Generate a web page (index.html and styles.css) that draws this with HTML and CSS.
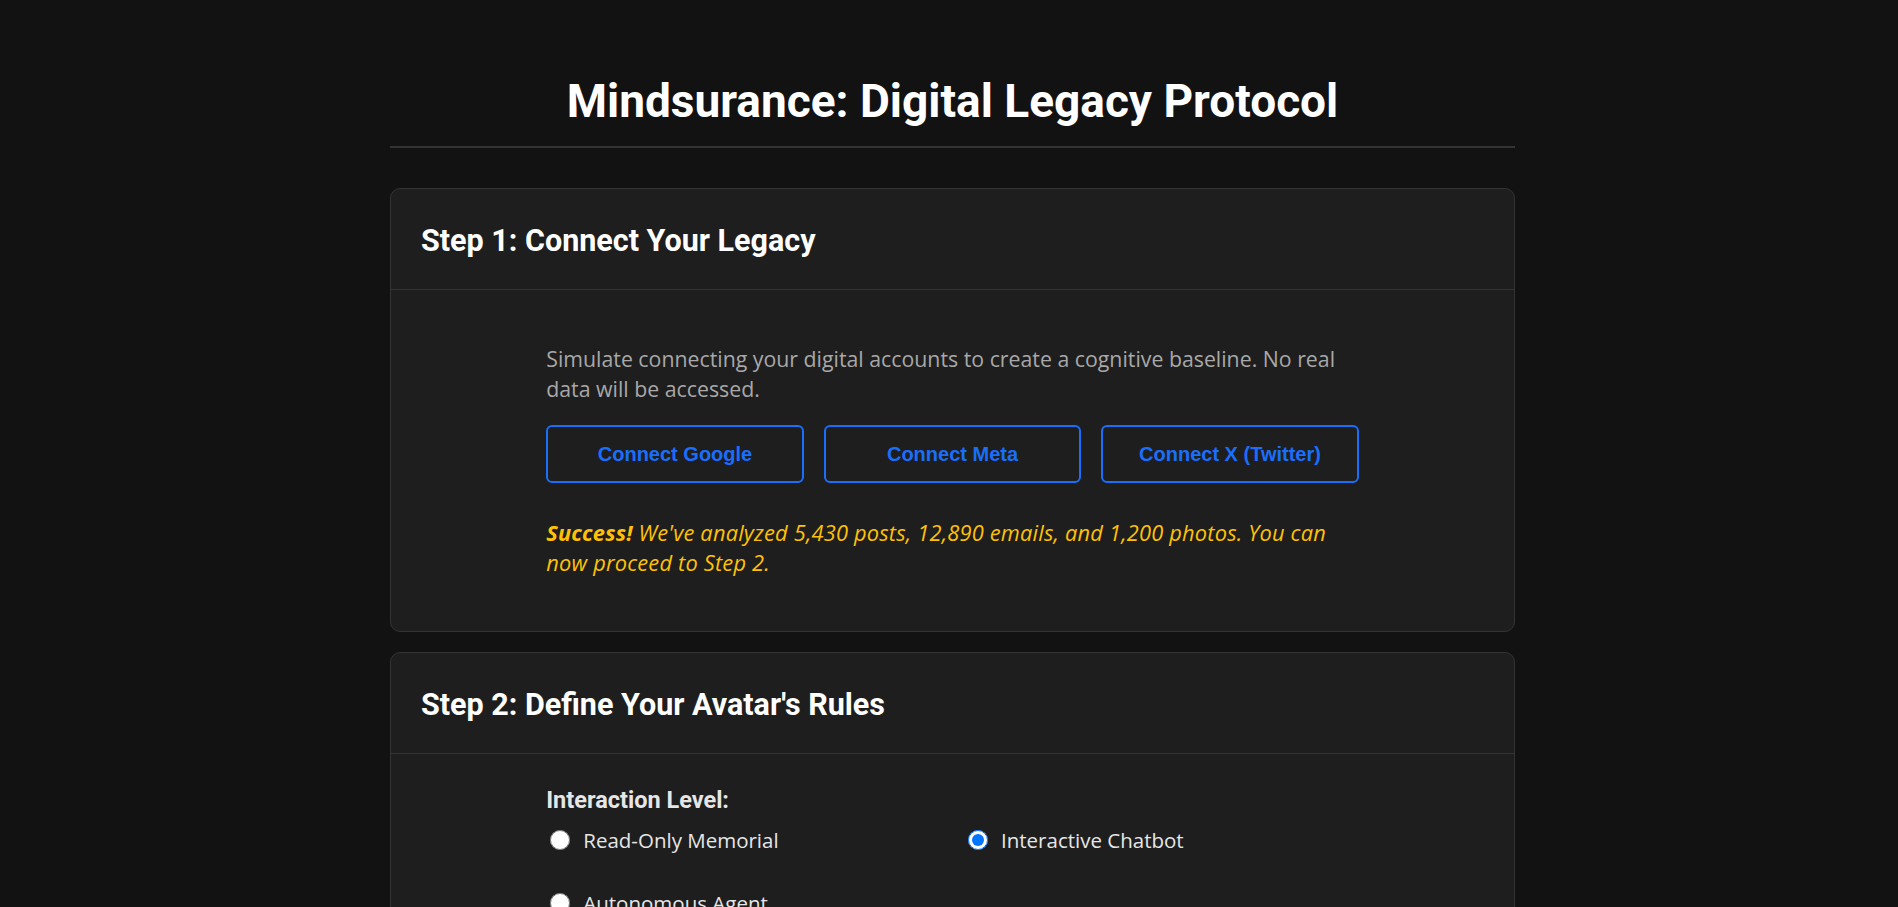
FILE: index.html
```html
<!DOCTYPE html>
<html lang="en">
<head>
<meta charset="utf-8">
<title>Mindsurance: Digital Legacy Protocol</title>
<link rel="stylesheet" href="styles.css">
</head>
<body>
<div class="container">
  <header class="page-header">
    <h1>Mindsurance: Digital Legacy Protocol</h1>
  </header>

  <section class="card">
    <div class="card-header">
      <h2>Step 1: Connect Your Legacy</h2>
    </div>
    <div class="card-body">
      <div class="content">
        <p class="muted">Simulate connecting your digital accounts to create a cognitive baseline. No real data will be accessed.</p>
        <div class="btn-row">
          <button class="btn">Connect Google</button>
          <button class="btn">Connect Meta</button>
          <button class="btn">Connect X (Twitter)</button>
        </div>
        <p class="success"><strong>Success!</strong> We've analyzed 5,430 posts, 12,890 emails, and 1,200 photos. You can now proceed to Step 2.</p>
      </div>
    </div>
  </section>

  <section class="card">
    <div class="card-header">
      <h2>Step 2: Define Your Avatar's Rules</h2>
    </div>
    <div class="card-body card-body-tight">
      <div class="content">
        <div class="field-label">Interaction Level:</div>
        <div class="radio-grid">
          <label class="radio"><input type="radio" name="level" value="memorial"><span>Read-Only Memorial</span></label>
          <label class="radio"><input type="radio" name="level" value="chatbot" checked><span>Interactive Chatbot</span></label>
          <label class="radio"><input type="radio" name="level" value="agent"><span>Autonomous Agent</span></label>
        </div>
      </div>
    </div>
  </section>
</div>
</body>
</html>
```

FILE: styles.css
```css
html, body {
  margin: 0;
  padding: 0;
}

body {
  background: #121212;
  color: #e0e0e0;
  font-family: "Open Sans", "Noto Sans", "Liberation Sans", sans-serif;
  font-size: 20.5px;
  line-height: 30px;
  padding-left: 7px;
}

.container {
  max-width: 1125px;
  margin: 0 auto;
}

.page-header {
  padding: 75px 0 19px;
  border-bottom: 2px solid #333333;
  margin-bottom: 40px;
  text-align: center;
}

.page-header h1 {
  margin: 0;
  font-family: Roboto, "Liberation Sans", sans-serif;
  font-size: 46px;
  line-height: 52px;
  font-weight: 700;
  color: #ffffff;
}

.card {
  background: #1e1e1e;
  border: 1px solid #333333;
  border-radius: 10px;
  margin-bottom: 20px;
}

.card-header {
  padding: 31px 30px 27px;
  border-bottom: 1px solid #333333;
}

.card-header h2 {
  margin: 0;
  font-family: Roboto, "Liberation Sans", sans-serif;
  font-size: 30.5px;
  line-height: 42px;
  font-weight: 700;
  color: #ffffff;
}

.card-body {
  padding: 54px 30px 53px;
}

.card-body-tight {
  padding-top: 31px;
}

.content {
  max-width: 812.5px;
  margin: 0 auto;
}

.muted {
  margin: 0 0 21px;
  font-size: 21.3px;
  color: #a8a8a8;
}

.btn-row {
  display: flex;
  gap: 20px;
}

.btn {
  flex: 1;
  background: transparent;
  border: 2.5px solid #1a6efc;
  border-radius: 6px;
  color: #1a6efc;
  font-family: "Liberation Sans", Arial, sans-serif;
  font-weight: 700;
  font-size: 20px;
  line-height: 23px;
  padding: 15.5px 10px;
  cursor: pointer;
}

.success {
  margin: 35px 0 0;
  font-size: 21.8px;
  letter-spacing: 0.2px;
  color: #ffc107;
  font-style: italic;
}

.field-label {
  font-family: Roboto, "Liberation Sans", sans-serif;
  font-size: 23.5px;
  font-weight: 700;
  color: #e6e6e6;
}

.radio-grid {
  display: grid;
  grid-template-columns: 1fr 1fr;
  column-gap: 23px;
  row-gap: 33px;
  margin-top: 10px;
}

.radio {
  display: flex;
  align-items: center;
  gap: 13px;
  color: #e6e6e6;
}

.radio input {
  width: 20px;
  height: 20px;
  margin: 0 0 0 4px;
}
```
